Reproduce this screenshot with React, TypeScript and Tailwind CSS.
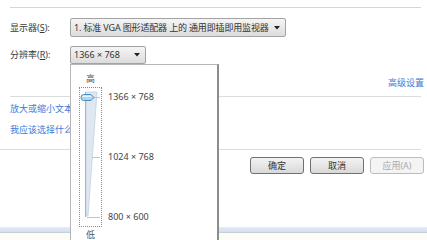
import React from "react";

const Combo: React.FC<{ width: string; children: React.ReactNode; h: string; small?: boolean }> = ({ width, children, h, small }) => (
  <div
    className={`${width} ${h} flex items-center justify-between rounded-[2px] border border-[#a3a3a3] bg-gradient-to-b from-[#f5f5f5] to-[#dcdcdc] pl-[3px] pr-[5px]`}
  >
    <span className={small ? "whitespace-nowrap tracking-[-0.15px] text-[#333]" : "whitespace-nowrap text-[#333]"}>
      {children}
    </span>
    <svg width="6" height="4" viewBox="0 0 6 4" className="shrink-0 ml-[3px]">
      <path d="M0 0 H6 L3 3.5 Z" fill="#222" />
    </svg>
  </div>
);

const Btn: React.FC<{ label: React.ReactNode; disabled?: boolean }> = ({ label, disabled }) => (
  <div
    className={
      disabled
        ? "w-[54px] h-[17px] flex items-center justify-center rounded-[3px] border border-[#bcbcbc] bg-[#f4f4f4] text-[#a8a8a8]"
        : "w-[54px] h-[17px] flex items-center justify-center rounded-[3px] border border-[#707070] bg-gradient-to-b from-[#f3f3f3] to-[#d9d9d9] text-[#333]"
    }
  >
    {label}
  </div>
);

const Slider: React.FC = () => (
  <div className="w-[23px] h-[140px] border border-dotted border-[#8c8c8c]">
    <svg width="21" height="138" viewBox="0 0 21 138">
      {/* wedge */}
      <path d="M6 4 L17 4 L8 128 L6 128 Z" fill="#dfe7f1" stroke="#c5d1df" strokeWidth="0.8" />
      <line x1="5.5" y1="4" x2="5.5" y2="129" stroke="#a9b3bf" strokeWidth="1" />
      {/* ticks */}
      <line x1="13" y1="9.5" x2="20" y2="9.5" stroke="#c4c4c4" strokeWidth="1" />
      <line x1="12" y1="69.5" x2="20" y2="69.5" stroke="#c4c4c4" strokeWidth="1" />
      <line x1="7" y1="129.5" x2="20" y2="129.5" stroke="#c4c4c4" strokeWidth="1" />
      {/* thumb */}
      <path
        d="M3.5 6.5 H11 L14 9.5 L11 12.5 H3.5 Q1 12.5 1 9.5 Q1 6.5 3.5 6.5 Z"
        fill="#a9d8f3"
        stroke="#3d86b8"
        strokeWidth="0.9"
      />
      <path d="M3.5 7.5 H10.5 L12 9 H2 Q2 7.5 3.5 7.5 Z" fill="#e4f5ff" />
    </svg>
  </div>
);

export default function App() {
  return (
    <div className="relative w-[427px] h-[240px] overflow-hidden bg-white text-[9px] leading-[12px] text-[#3a3a3a] font-['Noto_Sans','Noto_Sans_CJK_SC',sans-serif]">
      {/* top rule */}
      <div className="pt-[7px] pl-[10px] pr-[6px]">
        <div className="h-px bg-[#d6d6d6]" />
      </div>

      {/* monitor */}
      <div className="mt-[10px] flex items-center pl-[10px]">
        <span className="w-[60px]">
          显示器(<span className="underline">S</span>):
        </span>
        <Combo width="w-[216px]" h="h-[19px]" small>
          1. 标准 VGA 图形适配器 上的 通用即插即用监视器
        </Combo>
      </div>

      {/* resolution */}
      <div className="mt-[9px] flex items-center pl-[10px]">
        <span className="w-[60px]">
          分辨率(<span className="underline">R</span>):
        </span>
        <Combo width="w-[76px]" h="h-[18px]">
          1366 × 768
        </Combo>
      </div>

      <div className="mt-[13px] flex justify-end pr-[3px]">
        <span className="text-[#3d7bd6] whitespace-nowrap">高级设置</span>
      </div>

      <div className="mt-[7px] pl-[10px] pr-[6px]">
        <div className="h-px bg-[#dcdcdc]" />
      </div>

      <div className="mt-[6px] pl-[10px] text-[#3d7bd6] whitespace-nowrap">放大或缩小文本和其他项目</div>
      <div className="mt-[9px] pl-[10px] text-[#3d7bd6] whitespace-nowrap">我应该选择什么显示器设置？</div>

      <div className="mt-[13px] pr-[6px]">
        <div className="h-px bg-[#dcdcdc]" />
      </div>

      {/* buttons */}
      <div className="mt-[7px] flex justify-end gap-[6px] pr-[3px]">
        <Btn label="确定" />
        <Btn label="取消" />
        <Btn label="应用(A)" disabled />
      </div>

      {/* bottom band */}
      <div className="mt-[53px] h-[5px] bg-gradient-to-b from-[#e3ebf6] to-[#d2dff0]" />
      <div className="h-px bg-[#c9cfd6]" />
      <div className="h-[8px] bg-[#fdfdf8]" />

      {/* open resolution dropdown */}
      <div className="absolute left-[70px] top-[64px] w-[149px] h-[190px] bg-white border-l border-t border-[#b5b5b5] border-r-[2px] border-r-[#8d8d8d]">
        <div className="flex pl-[8px] pt-[8px]">
          <div className="flex flex-col items-center w-[23px]">
            <span className="h-[12px] text-[#555]">高</span>
            <div className="mt-[2px]">
              <Slider />
            </div>
            <span className="mt-[2px] text-[#555]">低</span>
          </div>
          <div className="ml-[6px] mt-[18px] h-[132px] flex flex-col justify-between text-[#444] whitespace-nowrap">
            <span>1366 × 768</span>
            <span>1024 × 768</span>
            <span>800 × 600</span>
          </div>
        </div>
      </div>
    </div>
  );
}
